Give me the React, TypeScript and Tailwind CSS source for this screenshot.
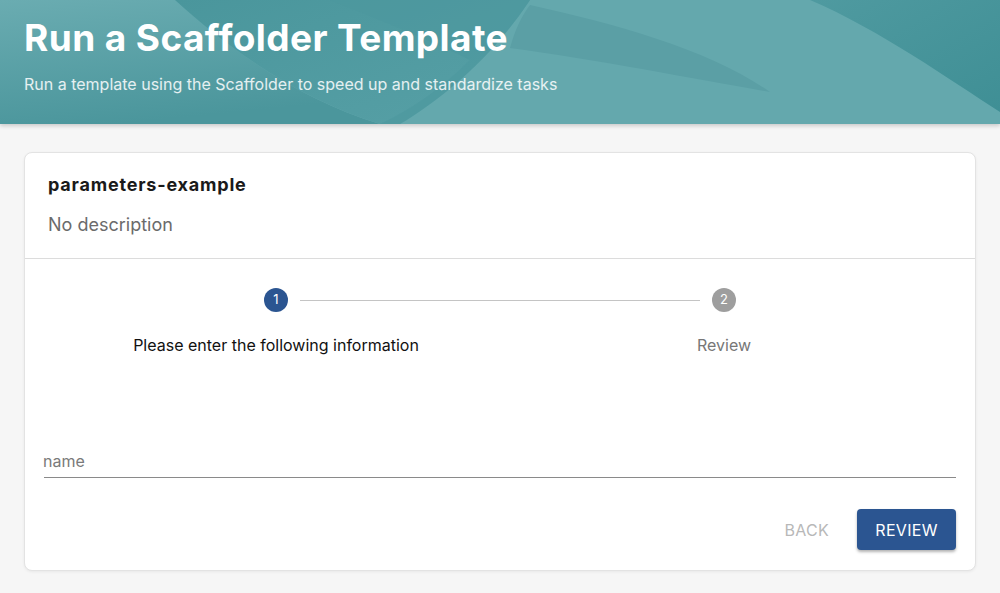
import React from "react";

export default function App() {
  return (
    <div className="w-[1000px] h-[593px] bg-[#f6f6f6] overflow-hidden" style={{ fontFamily: "Inter, 'Noto Sans', sans-serif" }}>
      <header className="relative h-[124px] bg-[#63a7ac] shadow-[0_2px_4px_rgba(0,0,0,0.18)] overflow-hidden">
        <svg className="absolute inset-0" width="1000" height="124" viewBox="0 0 1000 124" preserveAspectRatio="none">
          <defs>
            <linearGradient id="leftg" x1="0" y1="0" x2="0.3" y2="1">
              <stop offset="0" stopColor="#6aacb1" />
              <stop offset="1" stopColor="#4b969c" />
            </linearGradient>
            <linearGradient id="midg" x1="0" y1="0" x2="1" y2="1">
              <stop offset="0" stopColor="#4a969c" />
              <stop offset="1" stopColor="#57a0a6" />
            </linearGradient>
            <linearGradient id="rightg" x1="0" y1="0" x2="1" y2="1">
              <stop offset="0" stopColor="#4f9aa0" />
              <stop offset="1" stopColor="#3f8f95" />
            </linearGradient>
          </defs>
          <rect width="1000" height="124" fill="#64a8ad" />
          <path d="M0 0 H175 C 230 50, 300 100, 380 124 H0 Z" fill="url(#leftg)" />
          <path d="M175 0 C 230 50, 300 100, 380 124 L 400 124 C 440 100, 490 60, 530 0 Z" fill="url(#midg)" />
          <path d="M330 0 C 380 20, 430 40, 470 60 C 440 90, 410 110, 380 124 L 400 124 C 440 100, 490 60, 530 0 Z" fill="#4d989e" opacity="0.6" />
          <path d="M530 5 C 620 25, 710 50, 770 92 C 700 80, 600 60, 510 48 C 515 30, 522 15, 530 5 Z" fill="#5b9fa5" />
          <path d="M810 0 C 880 30, 950 80, 1000 112 L 1000 0 Z" fill="url(#rightg)" />
        </svg>
        <div className="relative px-6 pt-[16px]">
          <h1 className="text-white text-[37px] font-bold leading-[44px] tracking-[0.4px]">
            Run a Scaffolder Template
          </h1>
          <p className="mt-[14px] text-[16px] leading-[20px] text-white/85">
            Run a template using the Scaffolder to speed up and standardize tasks
          </p>
        </div>
      </header>

      <main className="px-6 pt-[28px]">
        <div className="bg-white rounded-[8px] border border-[#e3e3e3] shadow-[0_1px_3px_rgba(0,0,0,0.06)]">
          <div className="px-6 pt-[21px] pb-[22px] border-b border-[#dcdcdc]">
            <div className="text-[18px] font-bold text-[#1a1a1a] leading-[22px] tracking-[0.8px] ml-[-1px]">parameters-example</div>
            <div className="mt-[18px] text-[18px] text-[#6b6b6b] leading-[22px] ml-[-1px]">No description</div>
          </div>
          <div className="px-6 pt-[29px] pb-[20px]">
            <div className="grid grid-cols-2 mx-[3px]">
              <div className="relative flex flex-col items-center">
                <div className="w-6 h-6 rounded-full bg-[#2b5591] text-white text-[13px] flex items-center justify-center">1</div>
                <div className="mt-[23px] text-[16px] text-[#111] leading-[20px]">Please enter the following information</div>
              </div>
              <div className="relative flex flex-col items-center">
                <div className="absolute top-[12px] left-[calc(-50%+24px)] right-[calc(50%+24px)] h-px bg-[#c4c4c4]" />
                <div className="w-6 h-6 rounded-full bg-[#9e9e9e] text-white text-[13px] flex items-center justify-center">2</div>
                <div className="mt-[23px] text-[16px] text-[#777] leading-[20px]">Review</div>
              </div>
            </div>
            <div className="mt-[96px] mx-[-5px] border-b border-[#8a8a8a] pb-[6px]">
              <div className="text-[16px] text-[#7a7a7a] leading-[20px] ml-[-1px]">name</div>
            </div>
            <div className="mt-[31px] flex justify-end items-center gap-[20px] mr-[-5px]">
              <span className="text-[16px] text-[#b8b8b8] tracking-[0.3px] px-2">BACK</span>
              <button className="h-[41px] w-[99px] rounded-[4px] bg-[#2b5591] text-white text-[16px] tracking-[0.3px] shadow-[0_2px_3px_rgba(0,0,0,0.3)]">
                REVIEW
              </button>
            </div>
          </div>
        </div>
      </main>
    </div>
  );
}
